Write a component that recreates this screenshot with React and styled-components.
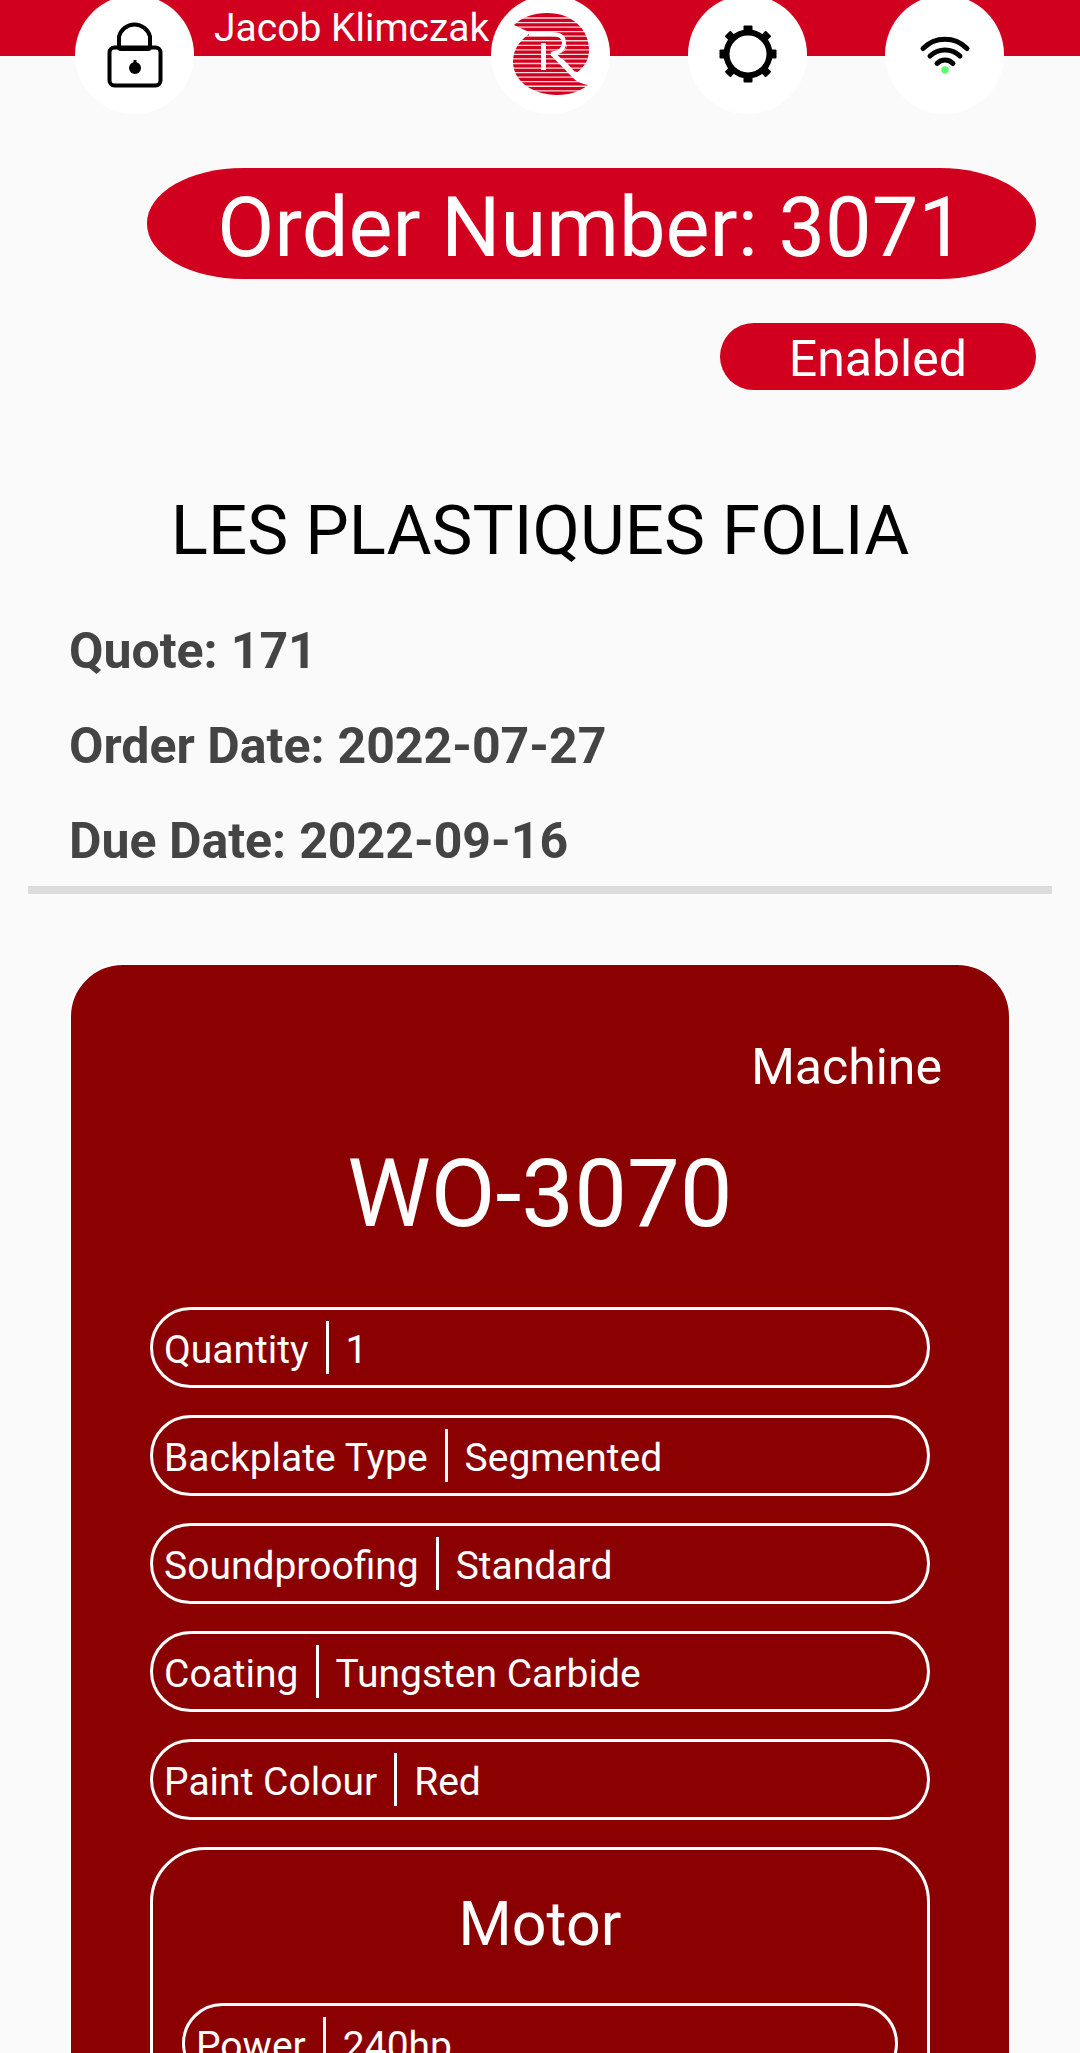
import React from "react";
import styled, { createGlobalStyle } from "styled-components";

const GlobalStyle = createGlobalStyle`
  *, *::before, *::after { box-sizing: border-box; }
  html, body { margin: 0; background: #fafafa; }
  body { font-family: Roboto, "Liberation Sans", sans-serif; color: #000; }
  h1, h2, h3, p, dl, dt, dd { margin: 0; font-weight: 400; }
`;

const Screen = styled.div`
  height: 100vh;
  overflow-y: auto;
  scrollbar-width: none;
  display: flex;
  flex-direction: column;
`;

const TopBar = styled.header`
  flex: none;
  height: 56px;
  padding: 0 76px 0 75px;
  background: #d2001f;
  display: flex;
  align-items: flex-start;
  gap: 78px;
`;

const UserGroup = styled.div`
  flex: 1;
  display: flex;
  align-items: flex-start;
`;

const UserName = styled.p`
  flex: 1;
  padding-left: 20px;
  color: #fff;
  font-size: 39px;
  line-height: 56px;
  white-space: nowrap;
`;

const RoundButton = styled.button`
  flex: none;
  width: 119px;
  height: 119px;
  margin-top: -5px;
  padding: 0 0 2px;
  border: 0;
  border-radius: 50%;
  background: #fff;
  display: grid;
  place-items: center;

  svg { display: block; }
`;

const Summary = styled.section`
  flex: none;
  padding: 112px 44px 0;
  display: flex;
  flex-direction: column;
  align-items: flex-end;
  gap: 44px;
`;

const OrderPill = styled.h1`
  padding: 8px 71px 0 70px;
  height: 111px;
  border-radius: 96px / 55px;
  background: #d2001f;
  color: #fff;
  font-size: 83px;
  line-height: 104px;
  white-space: nowrap;
`;

const StatusPill = styled.p`
  padding: 4px 69px 0;
  height: 67px;
  border-radius: 34px;
  background: #d2001f;
  color: #fff;
  font-size: 50px;
  line-height: 64px;
`;

const Customer = styled.h2`
  flex: none;
  margin-top: 101px;
  text-align: center;
  font-size: 69px;
  line-height: 80px;
`;

const Facts = styled.dl`
  flex: none;
  margin: 51px 28px 0;
  padding: 0 41px 16px;
  border-bottom: 8px solid #dcdcdc;
  display: flex;
  flex-direction: column;
  gap: 37px;
`;

const Fact = styled.div`
  display: flex;
  gap: 13px;
  color: #444;
  font-size: 50px;
  line-height: 58px;

  dt, dd { font-weight: 700; }
`;

const Card = styled.article`
  flex: none;
  margin: 68px 68px 0;
  padding: 69px 79px 79px;
  border: 3px solid #fff;
  border-radius: 55px;
  background: #8b0000;
  color: #fff;
`;

const Kind = styled.p`
  margin-right: -12px;
  text-align: right;
  font-size: 50px;
  line-height: 66px;
`;

const CardTitle = styled.h2`
  margin: 39px 0 58px;
  text-align: center;
  font-size: 94px;
  line-height: 110px;
`;

const Specs = styled.dl`
  display: flex;
  flex-direction: column;
  gap: 27px;
`;

const SpecRow = styled.div`
  height: 81px;
  padding: 0 11px;
  border: 3px solid #fff;
  border-radius: 41px;
  display: flex;
  align-items: center;
  font-size: 39px;
  line-height: 48px;
  white-space: nowrap;

  dt {
    padding: 5px 17px 0 0;
  }

  dd {
    padding: 5px 0 0 17px;
    border-left: 3px solid #fff;
  }
`;

const Group = styled.section`
  margin-top: 27px;
  padding: 29px;
  border: 3px solid #fff;
  border-radius: 55px;
`;

const GroupTitle = styled.h3`
  margin-bottom: 44px;
  padding-top: 10px;
  text-align: center;
  font-size: 61px;
  line-height: 70px;
`;

const LockIcon = () => (
  <svg width="58" height="72" viewBox="0 0 58 72" fill="none" stroke="#000" strokeWidth="4" aria-hidden="true">
    <rect x="3.5" y="29.5" width="51" height="38" rx="5" />
    <path d="M13 29V18.500a16 16 0 0 1 31 0V29q0 2-2 2H15q-2 0-2-2Z" />
    <circle cx="29" cy="50" r="6" fill="#000" stroke="none" />
    <path d="M29 42v6" strokeWidth="3" />
  </svg>
);

const stripes = Array.from({ length: 17 }, (_, i) => 6 + i * 4.55);

const LogoIcon = () => (
  <svg width="78" height="84" viewBox="0 0 78 84" aria-hidden="true">
    <path
      fill="#d2001f"
      d="M2 13C10 5 22 1 35 1C60 1 77 17 77 38C77 47 73 55 64 61L52 48L40 42C50 42 55 39 55 32C55 25 50 21 42 21H19Z"
    />
    <path
      fill="#d2001f"
      d="M17 22C6 30 1 39 1 50C1 69 21 83 45 83C58 83 69 79 76 73C70 72 65 70 60 65L40 43C50 42 55 38 55 31C55 25 50 22 42 22Z"
    />
    <g stroke="#fff" strokeWidth="1.3" opacity="0.85">
      {stripes.map((y) => (
        <path key={y} d={`M0 ${y}H78`} />
      ))}
    </g>
    <g fill="none" stroke="#fff">
      <path d="M31.500 31V58" strokeWidth="5" />
      <path d="M17 22H40C48 22 52 25 52 31C52 38 46 41 39 42" strokeWidth="4" />
      <path d="M40 41L63 64" strokeWidth="5" />
      <path d="M63 60L77 72" strokeWidth="2" />
    </g>
  </svg>
);

const GearIcon = () => (
  <svg width="58" height="58" viewBox="-29 -29 58 58" aria-hidden="true">
    <circle r="21.500" fill="none" stroke="#000" strokeWidth="6" />
    {[0, 45, 90, 135, 180, 225, 270, 315].map((angle) => (
      <rect
        key={angle}
        x={angle % 90 ? -4 : -4.5}
        y={angle % 90 ? -29 : -28.5}
        width={angle % 90 ? 8 : 9}
        height="7"
        rx="1"
        transform={`rotate(${angle})`}
      />
    ))}
  </svg>
);

const WifiIcon = () => (
  <svg width="52" height="40" viewBox="0 0 52 40" fill="none" stroke="#000" strokeWidth="5" strokeLinecap="round" aria-hidden="true">
    <path d="M4 14.500a31 31 0 0 1 44 0" />
    <path d="M11 22a21.500 21.500 0 0 1 30 0" />
    <path d="M18 29.500a11 11 0 0 1 16 0" />
    <circle cx="26" cy="36" r="3.700" fill="#5cff6c" stroke="none" />
  </svg>
);

const facts = [
  ["Quote:", "171"],
  ["Order Date:", "2022-07-27"],
  ["Due Date:", "2022-09-16"],
];

const machineSpecs = [
  ["Quantity", "1"],
  ["Backplate Type", "Segmented"],
  ["Soundproofing", "Standard"],
  ["Coating", "Tungsten Carbide"],
  ["Paint Colour", "Red"],
];

const motorSpecs = [["Power", "240hp"]];

const SpecList = ({ items }) => (
  <Specs>
    {items.map(([label, value]) => (
      <SpecRow key={label}>
        <dt>{label}</dt>
        <dd>{value}</dd>
      </SpecRow>
    ))}
  </Specs>
);

export default function App() {
  return (
    <>
      <GlobalStyle />
      <Screen>
        <TopBar>
          <UserGroup>
            <RoundButton type="button" aria-label="Lock"><LockIcon /></RoundButton>
            <UserName>Jacob Klimczak</UserName>
            <RoundButton type="button" aria-label="Home"><LogoIcon /></RoundButton>
          </UserGroup>
          <RoundButton type="button" aria-label="Settings"><GearIcon /></RoundButton>
          <RoundButton type="button" aria-label="Connection"><WifiIcon /></RoundButton>
        </TopBar>
        <Summary>
          <OrderPill>Order Number: 3071</OrderPill>
          <StatusPill>Enabled</StatusPill>
        </Summary>
        <Customer>LES PLASTIQUES FOLIA</Customer>
        <Facts>
          {facts.map(([label, value]) => (
            <Fact key={label}>
              <dt>{label}</dt>
              <dd>{value}</dd>
            </Fact>
          ))}
        </Facts>
        <Card>
          <Kind>Machine</Kind>
          <CardTitle>WO-3070</CardTitle>
          <SpecList items={machineSpecs} />
          <Group>
            <GroupTitle>Motor</GroupTitle>
            <SpecList items={motorSpecs} />
          </Group>
        </Card>
      </Screen>
    </>
  );
}
